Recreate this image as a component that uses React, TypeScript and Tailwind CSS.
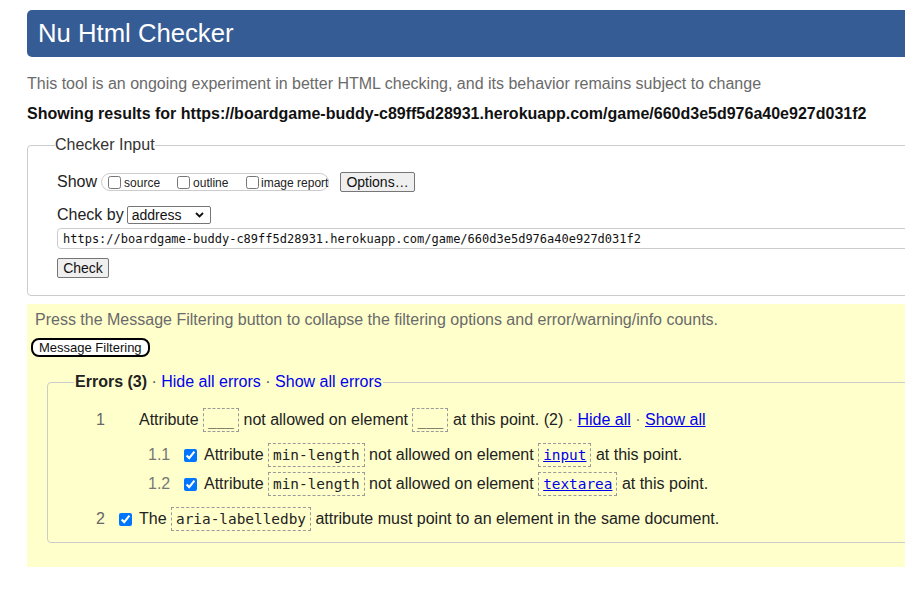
import React from "react";

const sans = { fontFamily: '"Liberation Sans", Arial, sans-serif' };

function Code({ children, link }: { children: React.ReactNode; link?: boolean }) {
  return (
    <code
      className={`inline-flex items-center align-middle h-[24px] border border-dashed border-[#9a9a9a] px-[4px] leading-[18px] text-[14.4px] ${link ? "text-[#0000ee] underline" : "text-[#222]"}`}
      style={{ fontFamily: '"DejaVu Sans Mono", monospace' }}
    >
      {children}
    </code>
  );
}

function Check() {
  return <input type="checkbox" defaultChecked className="w-[13px] h-[13px] m-0 accent-[#0075ff]" />;
}

export default function App() {
  return (
    <div className="w-[905px] h-[593px] overflow-hidden bg-white" style={sans}>
      <div className="w-[1000px] pl-[27px] text-[16px] text-[#222]">
        <header className="mt-[10px] h-[47px] bg-[#365c95] rounded-l-[5px] flex items-center pl-[11px]">
          <h1 className="text-white text-[25.7px] font-normal leading-none">Nu Html Checker</h1>
        </header>

        <p className="mt-[18px] leading-[18px] text-[#6a6a6a]">
          This tool is an ongoing experiment in better HTML checking, and its behavior remains subject to change
        </p>
        <p className="mt-[12px] leading-[18px] font-bold text-[#111]">
          Showing results for https://boardgame-buddy-c89ff5d28931.herokuapp.com/game/660d3e5d976a40e927d031f2
        </p>

        <fieldset className="mt-[13px] border border-[#cccccc] rounded-[4px] pl-[29px] pt-[18px] pb-[17px]">
          <legend className="-ml-[2px] px-0 leading-[18px] text-[#333]">Checker Input</legend>
          <div className="flex items-center h-[20px]">
            <span className="leading-[18px] text-[#222]">Show</span>
            <div className="ml-[4px] w-[228px] h-[18px] border border-[#cccccc] rounded-[9px] flex items-center pl-[6px] text-[12px] text-[#222] whitespace-nowrap">
              <label className="w-[69px] shrink-0 flex items-center">
                <input type="checkbox" className="w-[13px] h-[13px] m-0 mr-[3px]" />
                <span className="mt-[2px]">source</span>
              </label>
              <label className="w-[69px] shrink-0 flex items-center">
                <input type="checkbox" className="w-[13px] h-[13px] m-0 mr-[3px]" />
                <span className="mt-[2px]">outline</span>
              </label>
              <label className="shrink-0 flex items-center">
                <input type="checkbox" className="w-[13px] h-[13px] m-0 mr-[2px]" />
                <span className="mt-[2px]">image report</span>
              </label>
            </div>
            <button className="ml-[11px] w-[75px] h-[20px] bg-[#efefef] border border-[#767676] rounded-[2px] text-[14px] leading-none text-[#111]">
              Options…
            </button>
          </div>

          <div className="mt-[13px] flex items-center h-[19px]">
            <span className="leading-[18px]">Check by</span>
            <div className="ml-[3px] w-[84px] h-[18px] border border-[#767676] rounded-[2px] bg-white flex items-center justify-between pl-[4px] pr-[6px] text-[14px] leading-none text-[#111]">
              <span>address</span>
              <svg width="9" height="6" viewBox="0 0 9 6">
                <path d="M1 1 L4.5 4.5 L8 1" fill="none" stroke="#111" strokeWidth="1.8" />
              </svg>
            </div>
          </div>

          <div
            className="mt-[4px] h-[21px] border border-[#cccccc] rounded-l-[4px] flex items-center pl-[5px] text-[12px] text-[#111]"
            style={{ fontFamily: '"DejaVu Sans Mono", monospace' }}
          >
            https://boardgame-buddy-c89ff5d28931.herokuapp.com/game/660d3e5d976a40e927d031f2
          </div>

          <button className="mt-[9px] w-[52px] h-[20px] bg-[#efefef] border border-[#767676] rounded-[2px] text-[14px] leading-none text-[#111] block">
            Check
          </button>
        </fieldset>

        <section className="mt-[8px] bg-[#ffffcc] pt-[7px] pb-[24px] pl-[4px]">
          <p className="pl-[4px] leading-[18px] text-[#6a6a6a]">
            Press the Message Filtering button to collapse the filtering options and error/warning/info counts.
          </p>
          <button className="mt-[9px] h-[19px] px-[6px] bg-white border-2 border-black rounded-[8px] text-[13px] leading-none text-[#111]">
            Message Filtering
          </button>

          <fieldset className="mt-[14px] ml-[16px] border border-[#cccccc] rounded-[4px] pt-[17px] pb-[11px]">
            <legend className="ml-[26px] px-[1px] leading-[18px]">
              <b className="text-[#222]">Errors (3)</b>
              <span className="text-[#555]"> · </span>
              <a className="text-[#0000ee]">Hide all errors</a>
              <span className="text-[#555]"> · </span>
              <a className="text-[#0000ee]">Show all errors</a>
            </legend>

            <div className="flex items-center h-[24px]">
              <span className="w-[48px]" />
              <span className="w-[43px] text-[#666]">1</span>
              <span className="leading-[24px]">
                Attribute <Code>___</Code> not allowed on element <Code>___</Code> at this point. (2){" "}
                <span className="text-[#777]">·</span> <a className="text-[#0000ee] underline">Hide all</a>{" "}
                <span className="text-[#777]">·</span> <a className="text-[#0000ee] underline">Show all</a>
              </span>
            </div>

            <div className="mt-[11px] flex items-center h-[24px]">
              <span className="w-[100px]" />
              <span className="w-[36px] text-[#777]">1.1</span>
              <span className="w-[20px] flex items-center">
                <Check />
              </span>
              <span className="leading-[24px]">
                Attribute <Code>min-length</Code> not allowed on element <Code link>input</Code> at this point.
              </span>
            </div>

            <div className="mt-[5px] flex items-center h-[24px]">
              <span className="w-[100px]" />
              <span className="w-[36px] text-[#777]">1.2</span>
              <span className="w-[20px] flex items-center">
                <Check />
              </span>
              <span className="leading-[24px]">
                Attribute <Code>min-length</Code> not allowed on element <Code link>textarea</Code> at this point.
              </span>
            </div>

            <div className="mt-[11px] flex items-center h-[24px]">
              <span className="w-[48px]" />
              <span className="w-[23px] text-[#666]">2</span>
              <span className="w-[20px] flex items-center">
                <Check />
              </span>
              <span className="leading-[24px]">
                The <Code>aria-labelledby</Code> attribute must point to an element in the same document.
              </span>
            </div>
          </fieldset>
        </section>
      </div>
    </div>
  );
}
